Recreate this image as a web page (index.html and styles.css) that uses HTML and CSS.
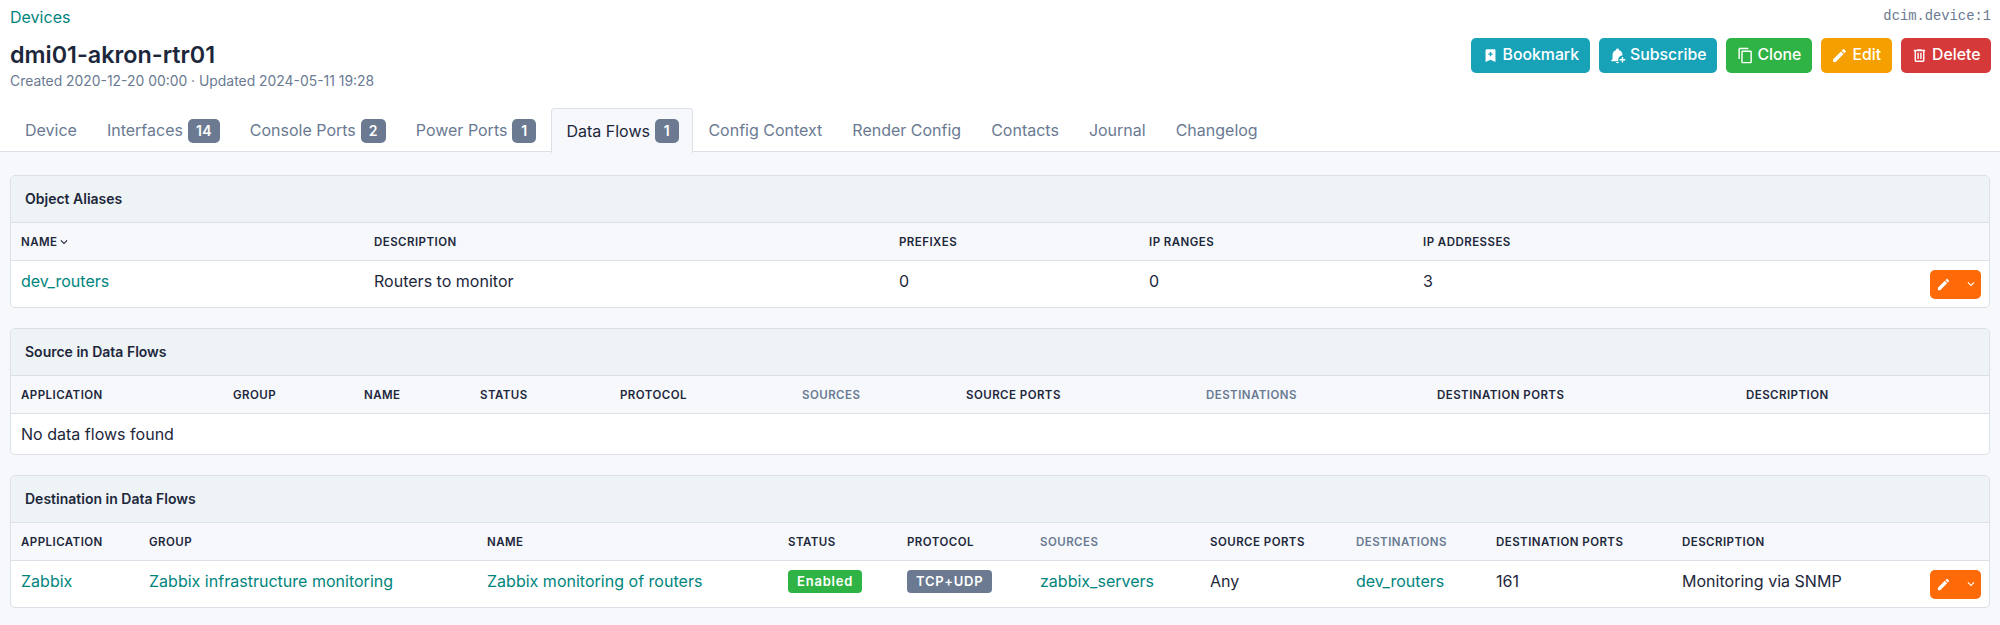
FILE: index.html
```html
<!DOCTYPE html>
<html lang="en">
<head>
    <meta charset="UTF-8">
    <title>dmi01-akron-rtr01</title>
    <link rel="stylesheet" href="styles.css">
</head>
<body>
    <header class="page-header">
        <div class="top-row">
            <a class="crumb" href="#">Devices</a>
            <code class="object-id">dcim.device:1</code>
        </div>
        <div class="title-row">
            <div>
                <h1>dmi01-akron-rtr01</h1>
                <div class="dates">Created 2020-12-20 00:00 · Updated 2024-05-11 19:28</div>
            </div>
            <div class="controls">
                <a class="btn btn-cyan" href="#"><svg viewBox="0 0 24 24"><path d="M17,3A2,2 0 0,1 19,5V21L12,18L5,21V5C5,3.89 5.9,3 7,3H17M11,7V9H9V11H11V13H13V11H15V9H13V7H11Z"/></svg>Bookmark</a>
                <a class="btn btn-cyan" href="#"><svg viewBox="0 0 24 24"><path d="M10 21H14A2 2 0 0 1 10 21Z M3 19V20H13.3C13.1 19.4 13 18.7 13 18C13 14.7 15.7 12 19 12V11C19 7.9 17 5.2 14 4.3V4A2 2 0 0 0 10 4V4.3C7 5.2 5 7.9 5 11V17L3 19Z M18 14V17H15V19H18V22H20V19H23V17H20V14H18Z"/></svg>Subscribe</a>
                <a class="btn btn-green" href="#"><svg viewBox="0 0 24 24"><path d="M19,21H8V7H19M19,5H8A2,2 0 0,0 6,7V21A2,2 0 0,0 8,23H19A2,2 0 0,0 21,21V7A2,2 0 0,0 19,5M16,1H4A2,2 0 0,0 2,3V17H4V3H16V1Z"/></svg>Clone</a>
                <a class="btn btn-yellow" href="#"><svg viewBox="0 0 24 24"><path d="M20.71,7.04C21.1,6.65 21.1,6 20.71,5.63L18.37,3.29C18,2.9 17.35,2.9 16.96,3.29L15.12,5.12L18.87,8.87M3,17.25V21H6.75L17.81,9.93L14.06,6.18L3,17.25Z"/></svg>Edit</a>
                <a class="btn btn-red" href="#"><svg viewBox="0 0 24 24"><path d="M9,3V4H4V6H5V19A2,2 0 0,0 7,21H17A2,2 0 0,0 19,19V6H20V4H15V3H9M7,6H17V19H7V6M9,8V17H11V8H9M13,8V17H15V8H13Z"/></svg>Delete</a>
            </div>
        </div>
        <nav class="tabs">
            <a class="tab" href="#">Device</a>
            <a class="tab" href="#">Interfaces <span class="count">14</span></a>
            <a class="tab" href="#">Console Ports <span class="count">2</span></a>
            <a class="tab" href="#">Power Ports <span class="count">1</span></a>
            <a class="tab active" href="#">Data Flows <span class="count">1</span></a>
            <a class="tab" href="#">Config Context</a>
            <a class="tab" href="#">Render Config</a>
            <a class="tab" href="#">Contacts</a>
            <a class="tab" href="#">Journal</a>
            <a class="tab" href="#">Changelog</a>
        </nav>
    </header>

    <main class="page-body">
        <section class="card">
            <h2 class="card-header">Object Aliases</h2>
            <table class="alias-table">
                <colgroup>
                    <col class="w353"><col class="w525"><col class="w250"><col class="w274"><col class="w507"><col class="w69">
                </colgroup>
                <thead>
                    <tr>
                        <th>Name<svg class="sort" viewBox="0 0 24 24"><path d="M7.41,8.58L12,13.17L16.59,8.58L18,10L12,16L6,10L7.41,8.58Z"/></svg></th>
                        <th>Description</th><th>Prefixes</th><th>IP Ranges</th><th>IP Addresses</th><th></th>
                    </tr>
                </thead>
                <tbody>
                    <tr>
                        <td><a href="#">dev_routers</a></td>
                        <td>Routers to monitor</td><td>0</td><td>0</td><td>3</td>
                        <td class="actions">
                            <span class="row-btn">
                                <svg viewBox="0 0 24 24"><path d="M20.71,7.04C21.1,6.65 21.1,6 20.71,5.63L18.37,3.29C18,2.9 17.35,2.9 16.96,3.29L15.12,5.12L18.87,8.87M3,17.25V21H6.75L17.81,9.93L14.06,6.18L3,17.25Z"/></svg>
                                <svg class="caret" viewBox="0 0 24 24"><path d="M7.41,8.58L12,13.17L16.59,8.58L18,10L12,16L6,10L7.41,8.58Z"/></svg>
                            </span>
                        </td>
                    </tr>
                </tbody>
            </table>
        </section>

        <section class="card">
            <h2 class="card-header">Source in Data Flows</h2>
            <table class="source-table">
                <colgroup>
                    <col class="w212"><col class="w131"><col class="w116"><col class="w140"><col class="w182"><col class="w164"><col class="w240"><col class="w231"><col class="w309"><col class="w253">
                </colgroup>
                <thead>
                    <tr>
                        <th>Application</th><th>Group</th><th>Name</th><th>Status</th><th>Protocol</th>
                        <th class="muted">Sources</th><th>Source Ports</th><th class="muted">Destinations</th>
                        <th>Destination Ports</th><th>Description</th>
                    </tr>
                </thead>
                <tbody>
                    <tr><td class="empty" colspan="10">No data flows found</td></tr>
                </tbody>
            </table>
        </section>

        <section class="card">
            <h2 class="card-header">Destination in Data Flows</h2>
            <table class="dest-table">
                <colgroup>
                    <col class="w128"><col class="w338"><col class="w301"><col class="w119"><col class="w133"><col class="w170"><col class="w146"><col class="w140"><col class="w186"><col class="w248"><col class="w69">
                </colgroup>
                <thead>
                    <tr>
                        <th>Application</th><th>Group</th><th>Name</th><th>Status</th><th>Protocol</th>
                        <th class="muted">Sources</th><th>Source Ports</th><th class="muted">Destinations</th>
                        <th>Destination Ports</th><th>Description</th><th></th>
                    </tr>
                </thead>
                <tbody>
                    <tr>
                        <td><a href="#">Zabbix</a></td>
                        <td><a href="#">Zabbix infrastructure monitoring</a></td>
                        <td><a href="#">Zabbix monitoring of routers</a></td>
                        <td><span class="badge badge-green">Enabled</span></td>
                        <td><span class="badge badge-gray">TCP+UDP</span></td>
                        <td><a href="#">zabbix_servers</a></td>
                        <td>Any</td>
                        <td><a href="#">dev_routers</a></td>
                        <td>161</td>
                        <td>Monitoring via SNMP</td>
                        <td class="actions">
                            <span class="row-btn">
                                <svg viewBox="0 0 24 24"><path d="M20.71,7.04C21.1,6.65 21.1,6 20.71,5.63L18.37,3.29C18,2.9 17.35,2.9 16.96,3.29L15.12,5.12L18.87,8.87M3,17.25V21H6.75L17.81,9.93L14.06,6.18L3,17.25Z"/></svg>
                                <svg class="caret" viewBox="0 0 24 24"><path d="M7.41,8.58L12,13.17L16.59,8.58L18,10L12,16L6,10L7.41,8.58Z"/></svg>
                            </span>
                        </td>
                    </tr>
                </tbody>
            </table>
        </section>
    </main>
</body>
</html>
```

FILE: styles.css
```css
/* Global Styles */
* {
    box-sizing: border-box;
    margin: 0;
    padding: 0;
}
body {
    font-family: Inter, "Noto Sans", sans-serif;
    font-size: 16.05px;
    line-height: 1.4;
    background: #f6f8fb;
    color: #1d273b;
}
a {
    color: #00857d;
    text-decoration: none;
}
svg {
    fill: currentColor;
    display: block;
}

/* Header */
.page-header {
    background: #ffffff;
    border-bottom: 1px solid #dce1e7;
    height: 152px;
    padding: 0 9px 0 10px;
}
.top-row {
    display: flex;
    justify-content: space-between;
    height: 34px;
    padding-top: 6px;
}
.object-id {
    font-family: "Liberation Mono", monospace;
    font-size: 13.8px;
    color: #6a7a92;
    margin-top: 1px;
}
.title-row {
    display: flex;
    justify-content: space-between;
    height: 74px;
}
h1 {
    font-size: 23.35px;
    font-weight: 600;
    line-height: 30px;
    margin-top: 6px;
}
.dates {
    font-size: 13.9px;
    color: #6a7a92;
    line-height: 20px;
    margin-top: 1px;
}
.controls {
    display: flex;
    gap: 9px;
    margin-top: 4px;
}
.btn {
    display: flex;
    align-items: center;
    gap: 4px;
    height: 35px;
    padding: 0 10.5px;
    border-radius: 5px;
    color: #ffffff;
    font-size: 15.8px;
    font-weight: 500;
}
.btn svg {
    width: 17px;
    height: 17px;
}
.btn-cyan { background: #17a2b8; }
.btn-green { background: #2fb344; }
.btn-yellow { background: #f59f00; }
.btn-red { background: #d63939; }

/* Tabs */
.tabs {
    display: flex;
    height: 44px;
    font-size: 16px;
}
.tab {
    display: flex;
    align-items: center;
    gap: 5px;
    height: 44px;
    padding: 0 14px;
    color: #6a7a92;
    border: 1px solid transparent;
    border-bottom: 0;
}
.tab.active {
    color: #1d273b;
    background: #f6f8fb;
    border-color: #dce1e7;
    border-radius: 4px 4px 0 0;
    height: 45px;
    padding-right: 13.5px;
}
.count {
    background: #6b7a90;
    color: #ffffff;
    font-size: 14px;
    font-weight: 600;
    letter-spacing: 0.3px;
    line-height: 24px;
    min-width: 24px;
    padding: 0 8px;
    text-align: center;
    border-radius: 5px;
}

/* Cards */
.page-body {
    padding: 23px 10px 0;
}
.card {
    background: #ffffff;
    border: 1px solid #dce1e7;
    border-radius: 5px;
    margin-bottom: 20px;
    overflow: hidden;
}
.card-header {
    background: #eef3f6;
    border-bottom: 1px solid #dce1e7;
    font-size: 14px;
    font-weight: 600;
    line-height: 46px;
    height: 47px;
    padding-left: 14px;
}

/* Tables */
table {
    width: 100%;
    border-collapse: collapse;
    table-layout: fixed;
}
th {
    background: #f6f8fb;
    border-bottom: 1px solid #dce1e7;
    font-size: 11.5px;
    font-weight: 600;
    letter-spacing: 0.45px;
    text-align: left;
    text-transform: uppercase;
    height: 37px;
    padding: 1px 10px 0;
    white-space: nowrap;
}
th.muted {
    color: #6a7a92;
}
th .sort {
    display: inline-block;
    width: 14px;
    height: 14px;
    vertical-align: -3px;
}
td {
    height: 47px;
    padding: 9px 10px 0;
    vertical-align: top;
    white-space: nowrap;
}
td.empty {
    height: 41px;
    padding-top: 0;
    vertical-align: middle;
}
td.actions {
    padding: 9px 8px 0 0;
    text-align: right;
}
.row-btn {
    display: inline-flex;
    align-items: center;
    justify-content: space-between;
    vertical-align: top;
    width: 51px;
    height: 29px;
    padding: 0 3px 0 6px;
    background: #fd6a07;
    color: #ffffff;
    border-radius: 5px;
}
.row-btn svg {
    width: 15px;
    height: 15px;
}
.row-btn .caret {
    width: 14px;
    height: 14px;
}
.badge {
    display: inline-block;
    color: #ffffff;
    font-size: 13px;
    font-weight: 600;
    letter-spacing: 0.8px;
    line-height: 23px;
    padding: 0 9px;
    border-radius: 4px;
    vertical-align: top;
}
.badge-green { background: #2fb344; }
.badge-gray { background: #6b7a90; }

/* Column widths */
.w69 { width: 69px; }
.w116 { width: 116px; }
.w119 { width: 119px; }
.w128 { width: 128px; }
.w131 { width: 131px; }
.w133 { width: 133px; }
.w140 { width: 140px; }
.w146 { width: 146px; }
.w164 { width: 164px; }
.w170 { width: 170px; }
.w182 { width: 182px; }
.w186 { width: 186px; }
.w212 { width: 212px; }
.w231 { width: 231px; }
.w240 { width: 240px; }
.w248 { width: 248px; }
.w250 { width: 250px; }
.w253 { width: 253px; }
.w274 { width: 274px; }
.w301 { width: 301px; }
.w309 { width: 309px; }
.w338 { width: 338px; }
.w353 { width: 353px; }
.w507 { width: 507px; }
.w525 { width: 525px; }
```
